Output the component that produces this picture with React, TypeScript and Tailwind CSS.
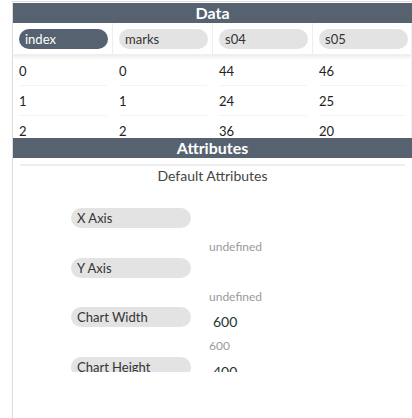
import React from "react";

const cols = ["index", "marks", "s04", "s05"];
const rows = [
  ["0", "0", "44", "46"],
  ["1", "1", "24", "25"],
  ["2", "2", "36", "20"],
];

const attrs: { label: string; value: string; def: string }[] = [
  { label: "X Axis", value: "", def: "undefined" },
  { label: "Y Axis", value: "", def: "undefined" },
  { label: "Chart Width", value: "600", def: "600" },
  { label: "Chart Height", value: "400", def: "400" },
];

export default function App() {
  return (
    <div className="w-[412px] h-[418px] bg-white overflow-hidden pl-[12px] pt-[1px] font-['Lato',sans-serif]">
      <div className="h-full border-l border-t border-[#dcdcdc] flex flex-col">
        <div className="h-[20px] mt-[1px] bg-[#566270] text-white font-bold text-[16px] leading-[20px] text-center">
          Data
        </div>
        <div className="h-[115px] overflow-hidden border-r border-[#eeeeee]">
          <div className="grid grid-cols-[100px_100px_100px_99px] h-[33px] border-b-2 border-[#efefef] shadow-[0_2px_3px_rgba(0,0,0,0.06)]">
            {cols.map((c, i) => (
              <div
                key={c}
                className={
                  "pt-[6px] pl-[6px] " + (i < 3 ? "border-r border-[#eeeeee]" : "")
                }
              >
                <div
                  className={
                    "w-[89px] h-[20px] rounded-full text-[13px] leading-[20px] pl-[6px] " +
                    (i === 0 ? "bg-[#566270] text-white" : "bg-[#e3e3e3] text-[#333]")
                  }
                >
                  {c}
                </div>
              </div>
            ))}
          </div>
          {rows.map((r, ri) => (
            <div key={ri} className="grid grid-cols-[100px_100px_100px_99px] h-[30px]">
              {r.map((v, ci) => (
                <div key={ci} className="px-[6px]">
                  <div className="h-[30px] leading-[30px] text-[13px] text-[#222] border-b border-[#f4f4f4]">
                    {v}
                  </div>
                </div>
              ))}
            </div>
          ))}
        </div>
        <div className="h-[20px] bg-[#566270] text-white font-bold text-[16px] leading-[20px] text-center">
          Attributes
        </div>
        <div className="h-[214px] overflow-hidden">
          <div className="mt-[6px] mx-[7px] border-t-2 border-[#eeeeee]" />
          <div className="text-center text-[14px] leading-[20px] text-[#444]">Default Attributes</div>
          <div className="mt-[22px] pl-[58px] flex flex-col">
            {attrs.map((a) => (
              <div key={a.label} className="h-[49.6px]">
                <div className="flex h-[20px] items-start">
                  <div className="w-[120px] h-[20px] rounded-full bg-[#e3e3e3] text-[#333] text-[13px] leading-[20px] pl-[6px] shrink-0">
                    {a.label}
                  </div>
                  <div className="ml-[18px] pl-[4px] mt-[5px] text-[14px] leading-[20px] text-[#233333]">
                    {a.value}
                  </div>
                </div>
                <div className="ml-[138px] mt-[11px] text-[12px] leading-[16px] text-[#9a9a9a]">
                  {a.def}
                </div>
              </div>
            ))}
          </div>
        </div>
      </div>
    </div>
  );
}
